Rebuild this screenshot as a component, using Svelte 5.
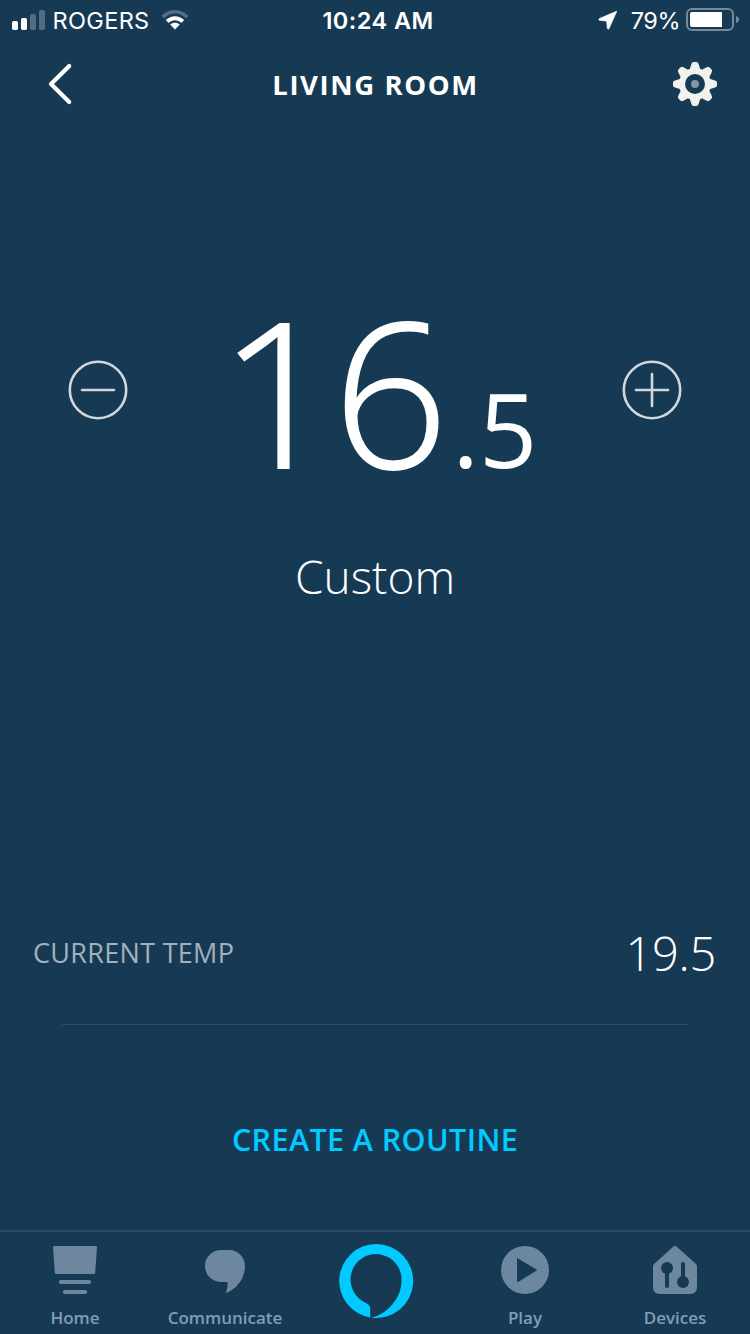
<script>
  let whole = $state(16);
  let tenth = $state(5);
  function step(d) {
    const v = whole * 10 + tenth + d;
    whole = Math.floor(v / 10);
    tenth = v % 10;
  }
</script>

<div class="screen">
  <div class="status">
    <div class="left">
      <svg width="34" height="22" viewBox="0 0 34 22">
        <rect x="0" y="12" width="6" height="9" rx="1.8" fill="#fff" />
        <rect x="9" y="9" width="6" height="12" rx="1.8" fill="#fff" />
        <rect x="18" y="5" width="6" height="16" rx="1.8" fill="#546d81" />
        <rect x="27" y="1" width="6" height="20" rx="1.8" fill="#546d81" />
      </svg>
      <span class="carrier">ROGERS</span>
      <svg class="wifi" width="28" height="22" viewBox="0 0 28 22">
        <path d="M0.5 6.8C8-1 20-1 27.500 6.800L25 9.400C18.500 3 9.500 3 3 9.400Z" fill="#546d81" />
        <path d="M4.800 11.100C10 6 18 6 23.200 11.100L20.400 14C16.500 10.300 11.500 10.300 7.600 14Z" fill="#fff" />
        <path d="M9.200 15.500C12 13 16 13 18.800 15.500L14 20.600Z" fill="#fff" />
      </svg>
    </div>
    <span class="time">10:24 AM</span>
    <div class="right">
      <svg class="loc" width="20" height="20" viewBox="0 0 20 20"><path d="M18.700 1.200L1.200 8.700Q0.300 9.600 1.400 10.200L8.700 11L9.400 18.500Q10.200 19.700 11 18.600Z" fill="#fff" stroke="#fff" stroke-width="0.800" stroke-linejoin="round" /></svg>
      <span class="pct">79%</span>
      <svg width="54" height="24" viewBox="0 0 54 24">
        <rect x="1" y="1" width="46" height="21" rx="5" fill="none" stroke="#748999" stroke-width="2" />
        <path d="M6 4H36V19H6Q4 19 4 17V6Q4 4 6 4Z" fill="#fff" />
        <path d="M50 8Q53 9 53 11.500Q53 14 50 15Z" fill="#748999" />
      </svg>
    </div>
  </div>

  <header>
    <button aria-label="Back"><svg width="28" height="44" viewBox="0 0 28 44"><path d="M23.200 3.900L5 22L23.200 40.100" fill="none" stroke="#fff" stroke-width="4.200" stroke-linecap="round" stroke-linejoin="round" /></svg></button>
    <h1>LIVING ROOM</h1>
    <button aria-label="Settings">
      <svg width="46" height="46" viewBox="-23 -23 46 46">
        <g fill="#f1f1ee">
          {#each [0, 45, 90, 135, 180, 225, 270, 315] as a}
            <path d="M-5.800-13L-3.600-20Q-3-22-1.500-22H1.500Q3-22 3.600-20L5.800-13Z" transform="rotate({a})" />
          {/each}
          <circle r="16" />
        </g>
        <circle r="10" fill="#173a54" />
        <circle r="4" fill="#8496a6" />
      </svg>
    </button>
  </header>

  <main>
    <section class="dial">
      <button aria-label="Decrease" onclick={() => step(-5)}>
        <svg width="60" height="60" viewBox="0 0 60 60"><circle cx="30" cy="30" r="28.200" /><path d="M14 30H46" /></svg>
      </button>
      <div class="value">
        {#each String(whole) as digit, i}<span class="digit" class:first={i === 0}>{digit}</span>{/each}<span class="dot">.</span><span class="tenth">{tenth}</span>
      </div>
      <button aria-label="Increase" onclick={() => step(5)}>
        <svg width="60" height="60" viewBox="0 0 60 60"><circle cx="30" cy="30" r="28.200" /><path d="M14 30H46M30 14V46" /></svg>
      </button>
    </section>
    <p class="mode">Custom</p>
    <div class="reading"><span class="label">CURRENT TEMP</span><span class="temp">19.5</span></div>
    <hr />
    <button class="routine">CREATE A ROUTINE</button>
  </main>

  <nav>
    <button>
      <svg width="50" height="50" viewBox="0 0 50 50" fill="#6d879f"><path d="M4 1H46Q47 1 47 2L45.200 27.500Q45 29 44 29H6Q5 29 4.800 27.500L3 2Q3 1 4 1Z" /><rect x="9" y="35" width="32" height="4" rx="1.800" /><rect x="13" y="45" width="24" height="4" rx="1.800" /></svg>
      <span>Home</span>
    </button>
    <button>
      <svg width="50" height="50" viewBox="0 0 50 50" fill="#6d879f"><path d="M21 5H29C38 5 45 12 45 21C45 33 37 44 26 48C25.500 48 25.500 47.500 26 47Q28 43 27.500 37H21C12 37 5 30 5 21C5 12 12 5 21 5Z" /></svg>
      <span>Communicate</span>
    </button>
    <button class="alexa" aria-label="Alexa">
      <svg width="76" height="76" viewBox="0 0 76 76"><path fill="#00caff" fill-rule="evenodd" d="M38 1A37 37 0 0 0 32.200 74.500V66C32.200 63 31 61.500 28.500 60.200A25.500 25.500 0 1 1 63.500 38C63.500 56 48 71.500 33.500 74.700A37 37 0 1 0 38 1Z" /></svg>
    </button>
    <button>
      <svg width="50" height="50" viewBox="0 0 50 50"><circle cx="25" cy="25" r="24" fill="#6d879f" /><path d="M17.700 13.200L36.500 24.400Q37.200 25 36.500 25.600L18.300 37Q17 37.300 17 36V14Q17 13 17.700 13.200Z" fill="#173a54" /></svg>
      <span>Play</span>
    </button>
    <button>
      <svg width="50" height="50" viewBox="0 0 50 50"><path d="M23.500 1.600Q25 0.400 26.500 1.600L46 19Q47 20 47 21.500V42Q47 49 40 49H10Q3 49 3 42V21.500Q3 20 4 19Z" fill="#6d879f" /><g fill="#173a54"><circle cx="17" cy="23" r="6" /><rect x="15" y="23" width="4" height="20" rx="2" /><circle cx="33" cy="37" r="6" /><rect x="31" y="17" width="4" height="20" rx="2" /></g></svg>
      <span>Devices</span>
    </button>
  </nav>
</div>

<style>
  :global(body) { margin: 0; background: #173a54; }
  .screen {
    width: 750px; height: 1334px; display: flex; flex-direction: column; overflow: hidden;
    background: #173a54; color: #fff; font-family: "Open Sans", "Noto Sans", sans-serif;
  }
  button { border: 0; padding: 0; margin: 0; background: none; color: inherit; font: inherit; }
  svg { display: block; flex: none; }
  .status {
    height: 40px; display: grid; grid-template-columns: 1fr auto 1fr; align-items: center;
    padding: 0 10px 0 12px; font: 400 23.5px/38px Inter, sans-serif;
  }
  .status span { padding-top: 2px; }
  .left, .right { display: flex; align-items: center; }
  .right { justify-content: flex-end; }
  .carrier { margin-left: 6.5px; letter-spacing: 0.35px; }
  .wifi { margin-left: 11.5px; }
  .time { font-weight: 600; letter-spacing: 0.45px; padding-left: 4px; }
  .loc { margin-right: 13px; }
  .pct { margin-right: 6px; letter-spacing: -0.5px; }
  header { height: 88px; box-sizing: border-box; display: flex; align-items: center; justify-content: space-between; padding: 0 32px 0 46px; }
  h1 { margin: 0; padding: 2px 0 0 5px; font-size: 27.500px; font-weight: 700; letter-spacing: 1.6px; line-height: 40px; }
  main { height: 1102px; display: flex; flex-direction: column; }
  .dial { height: 200px; margin: 162px 68px 0; display: flex; align-items: center; justify-content: space-between; }
  .dial svg { fill: none; stroke: #d1d8dd; stroke-width: 2.600; stroke-linecap: round; }
  .value { display: flex; align-items: baseline; font-size: 202px; line-height: 200px; font-weight: 300; padding-left: 5px; }
  .digit { -webkit-text-stroke: 1.800px #fff; stroke-linejoin: round; }
  .first { transform: scaleX(1.05); transform-origin: left; }
  .tenth, .dot { font-size: 102px; font-weight: 500; line-height: 100px; }
  .dot { margin-left: 4px; }
  .mode { margin: 51px 0 0; height: 70px; line-height: 70px; text-align: center; font-size: 46px; font-weight: 300; }
  .reading { margin: 301px 34px 0 33px; height: 80px; display: flex; align-items: center; justify-content: space-between; }
  .label { font-size: 27px; letter-spacing: 0.3px; color: #a3b1bd; padding-top: 1px; }
  .temp { font-size: 47px; font-weight: 300; letter-spacing: -0.3px; padding-top: 2px; }
  hr { width: 626px; height: 1px; border: 0; margin: 32px auto 0; background: #304e67; flex: none; }
  .routine { margin: 74px auto 0; height: 80px; font-size: 30.500px; font-weight: 600; letter-spacing: 0.4px; color: #00caff; }
  nav { height: 104px; box-sizing: border-box; border-top: 2px solid #2c4b63; display: grid; grid-template-columns: repeat(5, 150px); }
  nav button { display: flex; flex-direction: column; align-items: center; padding-top: 13px; }
  nav span { margin-top: 11px; font-size: 17px; line-height: 24px; font-weight: 600; color: #819db8; }
  nav .alexa { padding: 11px 0 0 1px; }
</style>
